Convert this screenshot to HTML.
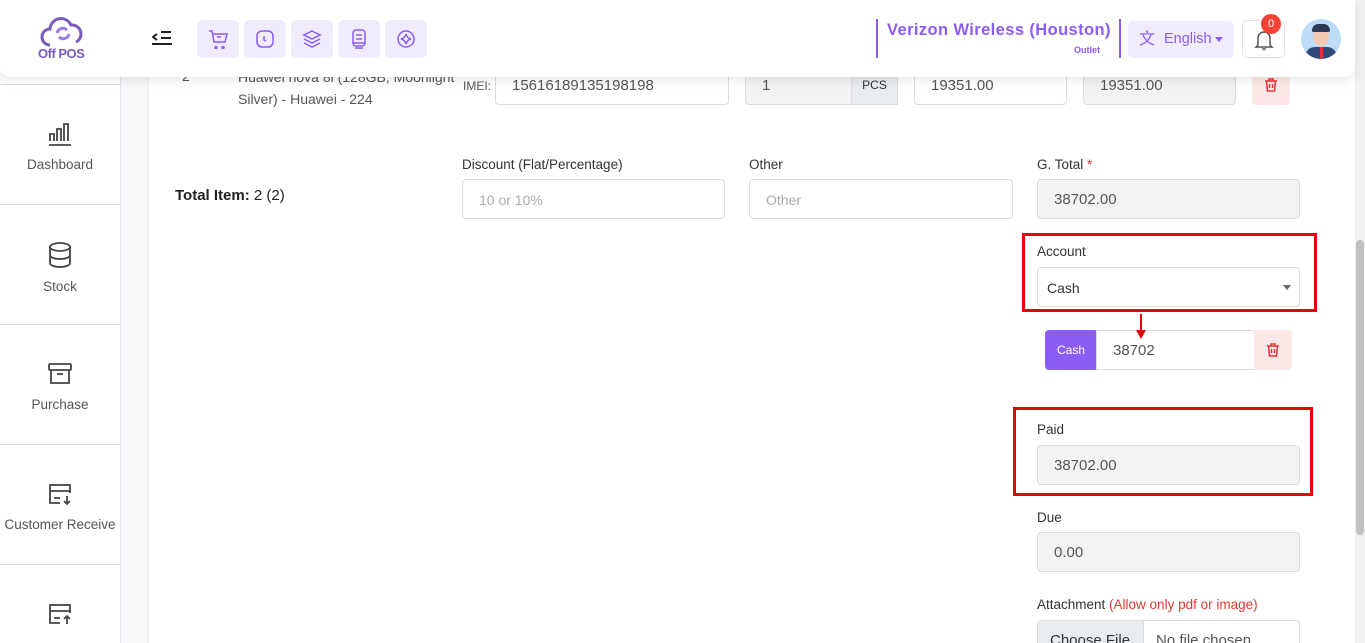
<!DOCTYPE html>
<html style="width:1365px;height:643px;overflow:hidden"><head><meta charset="utf-8"><style>
*{box-sizing:border-box;margin:0;padding:0}
body{width:1365px;height:643px;overflow:hidden;background:#f8f8fa;font-family:"Liberation Sans",sans-serif;color:#333;position:relative;font-size:14px}
.abs{position:absolute}
.side{left:0;top:0;width:121px;height:643px;background:#fff;border-right:1px solid #e4e4e8}
.sitem{position:absolute;left:0;width:120px;height:120px;border-top:1px solid #dcdce2;text-align:center;color:#555;font-size:13.5px;overflow:hidden}
.sitem svg{display:block;margin:0 auto 10px}
.card{left:148px;top:0;width:1207px;height:643px;background:#fff;border-left:1px solid #e9e9ee}
.hdr{left:0;top:0;width:1355px;height:77px;background:#fff;border-radius:0 0 10px 10px;box-shadow:0 3px 10px rgba(0,0,0,.1);z-index:5}
.qb{position:absolute;top:20px;width:42px;height:38px;background:#f1ecfd;border-radius:6px;display:flex;align-items:center;justify-content:center}
.inp{position:absolute;height:40px;border:1px solid #dcdce0;border-radius:4px;background:#fff;font-size:15px;color:#555;padding-left:16px;line-height:40px}
.gray{background:#f3f3f4}
.lbl{position:absolute;font-size:13.5px;color:#333}
.red{position:absolute;border:3px solid #e8000b}
</style></head><body>
<div class="abs side">
 <div class="sitem" style="top:84px;padding-top:36px"><svg width="26" height="26" viewBox="0 0 26 26" fill="none" stroke="#444" stroke-width="1.8"><path d="M2 24h22M3 20v-7h4v7M10 20V8h4v12M17 20V3h4v17"/></svg>Dashboard</div>
 <div class="sitem" style="top:204px;padding-top:36px"><svg width="24" height="28" viewBox="0 0 24 28" fill="none" stroke="#444" stroke-width="1.8"><ellipse cx="12" cy="6" rx="10" ry="4"/><path d="M2 6v16c0 2 4 4 10 4s10-2 10-4V6M2 14c0 2 4 4 10 4s10-2 10-4"/></svg>Stock</div>
 <div class="sitem" style="top:324px;padding-top:36px"><svg width="26" height="26" viewBox="0 0 26 26" fill="none" stroke="#444" stroke-width="1.8"><rect x="2" y="3" width="22" height="6" rx="1"/><path d="M4 9v13h18V9M10 13h6"/></svg>Purchase</div>
 <div class="sitem" style="top:444px;padding-top:36px"><svg width="28" height="26" viewBox="0 0 28 26" fill="none" stroke="#444" stroke-width="1.8"><path d="M14 22H4V4h20v8M4 10h20M8 17h6M21 15v8M18 20l3 3 3-3"/></svg>Customer Receive</div>
 <div class="sitem" style="top:564px;height:79px;padding-top:36px"><svg width="28" height="26" viewBox="0 0 28 26" fill="none" stroke="#444" stroke-width="1.8"><path d="M14 22H4V4h20v8M4 10h20M8 17h6M21 23v-8M18 18l3-3 3 3"/></svg></div>
</div>
<div class="abs card"></div>
<div class="abs" style="left:1355px;top:0;width:10px;height:643px;background:#f1f1f1"></div>
<div class="abs" style="left:1356px;top:240px;width:8px;height:295px;background:#c1c1c1;border-radius:4px"></div>

<div class="abs" style="left:182px;top:68px;font-size:14px;color:#555">2</div>
<div class="abs" style="left:238px;top:66px;font-size:14px;color:#555;line-height:22px">Huawei nova 8i (128GB, Moonlight<br>Silver) - Huawei - 224</div>
<div class="abs" style="left:463px;top:79px;font-size:12px;color:#555">IMEI:</div>
<div class="inp" style="left:495px;top:65px;width:234px">15616189135198198</div>
<div class="inp gray" style="left:745px;top:65px;width:153px">1</div>
<div class="abs" style="left:851px;top:65px;width:47px;height:40px;background:#e9ecef;border:1px solid #dcdce0;font-size:12px;line-height:38px;text-align:center">PCS</div>
<div class="inp" style="left:914px;top:65px;width:153px">19351.00</div>
<div class="inp gray" style="left:1083px;top:65px;width:153px">19351.00</div>
<div class="abs" style="left:1252px;top:65px;width:38px;height:40px;background:#fde8e8;border-radius:4px;display:flex;align-items:center;justify-content:center"><svg width="16" height="16" viewBox="0 0 16 16" fill="none" stroke="#e33" stroke-width="1.5"><path d="M2 4h12M6 4V2h4v2M3.5 4l1 10h7l1-10M6.5 7v4M9.5 7v4"/></svg></div>

<div class="abs" style="left:175px;top:187px;font-size:15px;color:#222"><b>Total Item:</b> 2 (2)</div>
<div class="lbl" style="left:462px;top:157px">Discount (Flat/Percentage)</div>
<div class="inp" style="left:462px;top:179px;width:263px;color:#aaa;font-size:14px">10 or 10%</div>
<div class="lbl" style="left:749px;top:157px">Other</div>
<div class="inp" style="left:749px;top:179px;width:264px;color:#aaa;font-size:14px">Other</div>
<div class="lbl" style="left:1037px;top:157px">G. Total <span style="color:#e33">*</span></div>
<div class="inp gray" style="left:1037px;top:179px;width:263px">38702.00</div>

<div class="red" style="left:1022px;top:233px;width:295px;height:79px"></div>
<div class="lbl" style="left:1037px;top:244px">Account</div>
<div class="inp" style="left:1037px;top:267px;width:263px;font-size:14px;padding-left:9px;color:#333">Cash<span style="position:absolute;right:8px;top:17px;border:4px solid transparent;border-top:5px solid #666"></span></div>

<div class="abs" style="left:1045px;top:330px;width:52px;height:40px;background:#8b5cf6;color:#fff;font-size:12px;line-height:40px;text-align:center;border-radius:4px 0 0 4px">Cash</div>
<div class="inp" style="left:1096px;top:330px;width:159px;border-radius:0;color:#555">38702</div>
<div class="abs" style="left:1254px;top:330px;width:38px;height:40px;background:#fde8e8;border-radius:0 4px 4px 0;display:flex;align-items:center;justify-content:center"><svg width="16" height="16" viewBox="0 0 16 16" fill="none" stroke="#e33" stroke-width="1.5"><path d="M2 4h12M6 4V2h4v2M3.5 4l1 10h7l1-10M6.5 7v4M9.5 7v4"/></svg></div>
<div class="abs" style="left:1140px;top:314px;width:2px;height:20px;background:#e8000b"></div>
<div class="abs" style="left:1136px;top:330px;border:5px solid transparent;border-top:9px solid #e8000b"></div>

<div class="red" style="left:1013px;top:407px;width:300px;height:89px"></div>
<div class="lbl" style="left:1037px;top:422px">Paid</div>
<div class="inp gray" style="left:1037px;top:445px;width:263px">38702.00</div>
<div class="lbl" style="left:1037px;top:510px">Due</div>
<div class="inp gray" style="left:1037px;top:532px;width:263px">0.00</div>
<div class="lbl" style="left:1037px;top:597px">Attachment <span style="color:#e33">(Allow only pdf or image)</span></div>
<div class="abs" style="left:1037px;top:620px;width:263px;height:23px;overflow:hidden">
<div class="inp" style="left:0;top:0;width:263px;padding:0;overflow:hidden;font-size:15px"><span style="display:inline-block;background:#e9ecef;width:106px;height:40px;border-right:1px solid #dcdce0;padding-left:12px;color:#333">Choose File</span><span style="padding-left:12px">No file chosen</span></div></div>

<div class="abs hdr">
 <svg style="position:absolute;left:40px;top:17px" width="46" height="30" viewBox="0 0 46 30" fill="none" stroke="#7b5cbf" stroke-width="3"><path d="M10 28a8 8 0 0 1 0-16 11 11 0 0 1 21-4 9 9 0 0 1 5 17"/><path d="M17 16a6 6 0 0 1 10-3M29 17a6 6 0 0 1-10 3" stroke="#9c7ee0"/></svg>
 <div style="position:absolute;left:38px;top:46px;font-size:13px;font-weight:bold;color:#7b5cbf;letter-spacing:-.5px">Off POS</div>
 <svg style="position:absolute;left:152px;top:30px" width="20" height="16" viewBox="0 0 20 16" fill="none" stroke="#222" stroke-width="2"><path d="M9 2h10M9 8h10M0 14h20M5 4L1 7l4 3" /></svg>
 <div class="qb" style="left:197px"><svg width="20" height="20" viewBox="0 0 20 20" fill="none" stroke="#8b5cf6" stroke-width="1.5"><path d="M1 2h3l2 11h11l2-8H5M8 17.5a1 1 0 1 0 0.1 0M15 17.5a1 1 0 1 0 0.1 0M9 8h4"/></svg></div>
 <div class="qb" style="left:244px"><svg width="20" height="20" viewBox="0 0 20 20" fill="none" stroke="#8b5cf6" stroke-width="1.5"><rect x="2" y="2" width="16" height="16" rx="5"/><path d="M9 7v4l2 1"/></svg></div>
 <div class="qb" style="left:291px"><svg width="20" height="20" viewBox="0 0 20 20" fill="none" stroke="#8b5cf6" stroke-width="1.5"><path d="M10 2l8 4-8 4-8-4zM2 10l8 4 8-4M2 14l8 4 8-4"/></svg></div>
 <div class="qb" style="left:338px"><svg width="20" height="20" viewBox="0 0 20 20" fill="none" stroke="#8b5cf6" stroke-width="1.5"><rect x="4" y="1" width="12" height="16" rx="3"/><path d="M7 6h6M7 10h6M4 14h12M6 19h8"/></svg></div>
 <div class="qb" style="left:385px"><svg width="20" height="20" viewBox="0 0 20 20" fill="none" stroke="#8b5cf6" stroke-width="1.5"><circle cx="10" cy="10" r="8"/><path d="M10 5q1 4 5 5-4 1-5 5-1-4-5-5 4-1 5-5z"/></svg></div>
 <div style="position:absolute;left:876px;top:19px;width:2px;height:39px;background:#8b5cf6"></div>
 <div style="position:absolute;left:887px;top:21px;font-size:16.5px;font-weight:bold;color:#8b5cf6;letter-spacing:.4px">Verizon Wireless (Houston)</div>
 <div style="position:absolute;left:1074px;top:45px;font-size:9px;font-weight:bold;color:#8b5cf6">Outlet</div>
 <div style="position:absolute;left:1119px;top:19px;width:2px;height:39px;background:#8b5cf6"></div>
 <div style="position:absolute;left:1128px;top:21px;width:106px;height:37px;background:#f1ecfd;border-radius:5px;color:#8b5cf6;font-size:14.5px;line-height:37px;padding-left:36px">English<span style="position:absolute;left:11px;top:0;font-size:16px">文</span><span style="position:absolute;right:11px;top:16px;border:4px solid transparent;border-top:5px solid #8b5cf6"></span></div>
 <div style="position:absolute;left:1242px;top:20px;width:43px;height:38px;border:1px solid #e3e3e6;border-radius:5px"><svg style="position:absolute;left:11px;top:8px" width="20" height="22" viewBox="0 0 20 22" fill="none" stroke="#555" stroke-width="1.5"><path d="M4 16V9a6 6 0 0 1 12 0v7l2 2H2zM8 20h4"/></svg></div>
 <div style="position:absolute;left:1261px;top:14px;width:20px;height:20px;border-radius:50%;background:#f44336;color:#fff;font-size:11px;text-align:center;line-height:20px">0</div>
 <div style="position:absolute;left:1301px;top:19px;width:40px;height:40px;border-radius:50%;background:#bcdcf7;overflow:hidden">
  <div style="position:absolute;left:12px;top:8px;width:16px;height:19px;border-radius:50%;background:#f4c9b0"></div>
  <div style="position:absolute;left:11px;top:5px;width:18px;height:8px;border-radius:8px 8px 2px 2px;background:#2d3a55"></div>
  <div style="position:absolute;left:4px;top:28px;width:32px;height:16px;border-radius:10px 10px 0 0;background:#2f4a78"></div>
  <div style="position:absolute;left:19px;top:28px;width:3px;height:12px;background:#d33"></div>
 </div>
</div>
</body></html>
